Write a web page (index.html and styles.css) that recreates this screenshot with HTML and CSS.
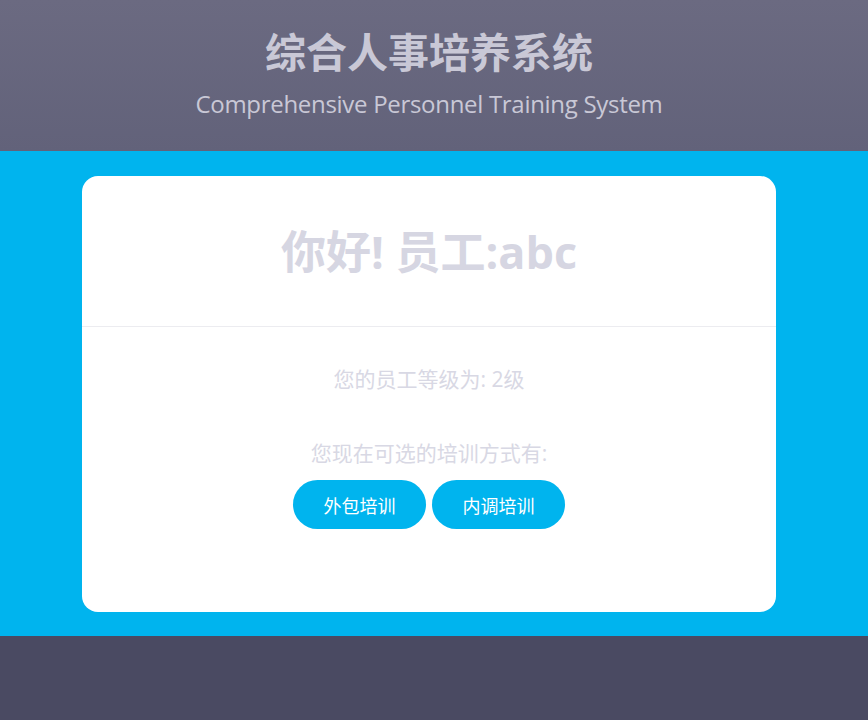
FILE: index.html
```html
<!DOCTYPE html>
<html lang="zh">
<head>
<meta charset="utf-8">
<link rel="stylesheet" href="styles.css">
</head>
<body>
<header class="top">
  <h1 class="title">综合人事培养系统</h1>
  <p class="subtitle">Comprehensive Personnel Training System</p>
</header>
<main class="band">
  <section class="card">
    <div class="card-head">
      <h2 class="greet">你好! 员工:abc</h2>
    </div>
    <div class="card-body">
      <p class="info">您的员工等级为: 2级</p>
      <p class="info choose">您现在可选的培训方式有:</p>
      <div class="btns">
        <button class="btn">外包培训</button>
        <button class="btn">内调培训</button>
      </div>
    </div>
  </section>
</main>
<footer class="bottom"></footer>
</body>
</html>
```
FILE: styles.css
```css
html, body {
  margin: 0;
  padding: 0;
  height: 100%;
}
body {
  font-family: "Open Sans", "Noto Sans CJK SC", sans-serif;
  background: #4a4a62;
}
.top {
  height: 151px;
  padding-right: 10px;
  background: linear-gradient(#6b6a81, #62627a);
  text-align: center;
  overflow: hidden;
}
.title {
  margin: 24px 0 0;
  font-size: 41px;
  line-height: 56px;
  font-weight: 700;
  color: #c9c8d6;
}
.subtitle {
  margin: 0;
  font-size: 24px;
  line-height: 48px;
  color: #c9c8d6;
  letter-spacing: -0.3px;
}
.band {
  background: #00b4ee;
  padding: 25px 92px 24px 82px;
  height: 485px;
  box-sizing: border-box;
}
.card {
  background: #fff;
  border-radius: 16px;
  height: 436px;
  text-align: center;
}
.card-head {
  height: 150px;
  border-bottom: 1px solid #ececf0;
  display: flex;
  align-items: center;
  justify-content: center;
}
.greet {
  margin: 0;
  font-size: 45px;
  font-weight: 700;
  color: #d6d6e2;
  line-height: 1;
}
.card-body {
  padding-top: 37px;
}
.info {
  margin: 0;
  font-size: 21px;
  line-height: 30px;
  color: #d8d8e4;
}
.choose {
  margin-top: 44px;
}
.btns {
  margin-top: 12px;
  display: flex;
  justify-content: center;
  gap: 6px;
}
.btn {
  width: 133px;
  height: 49px;
  border: none;
  border-radius: 25px;
  background: #00b4ee;
  color: #fff;
  font-family: "Open Sans", "Noto Sans CJK SC", sans-serif;
  font-size: 18px;
}
.bottom {
  height: 84px;
  background: #4a4a62;
}
```
